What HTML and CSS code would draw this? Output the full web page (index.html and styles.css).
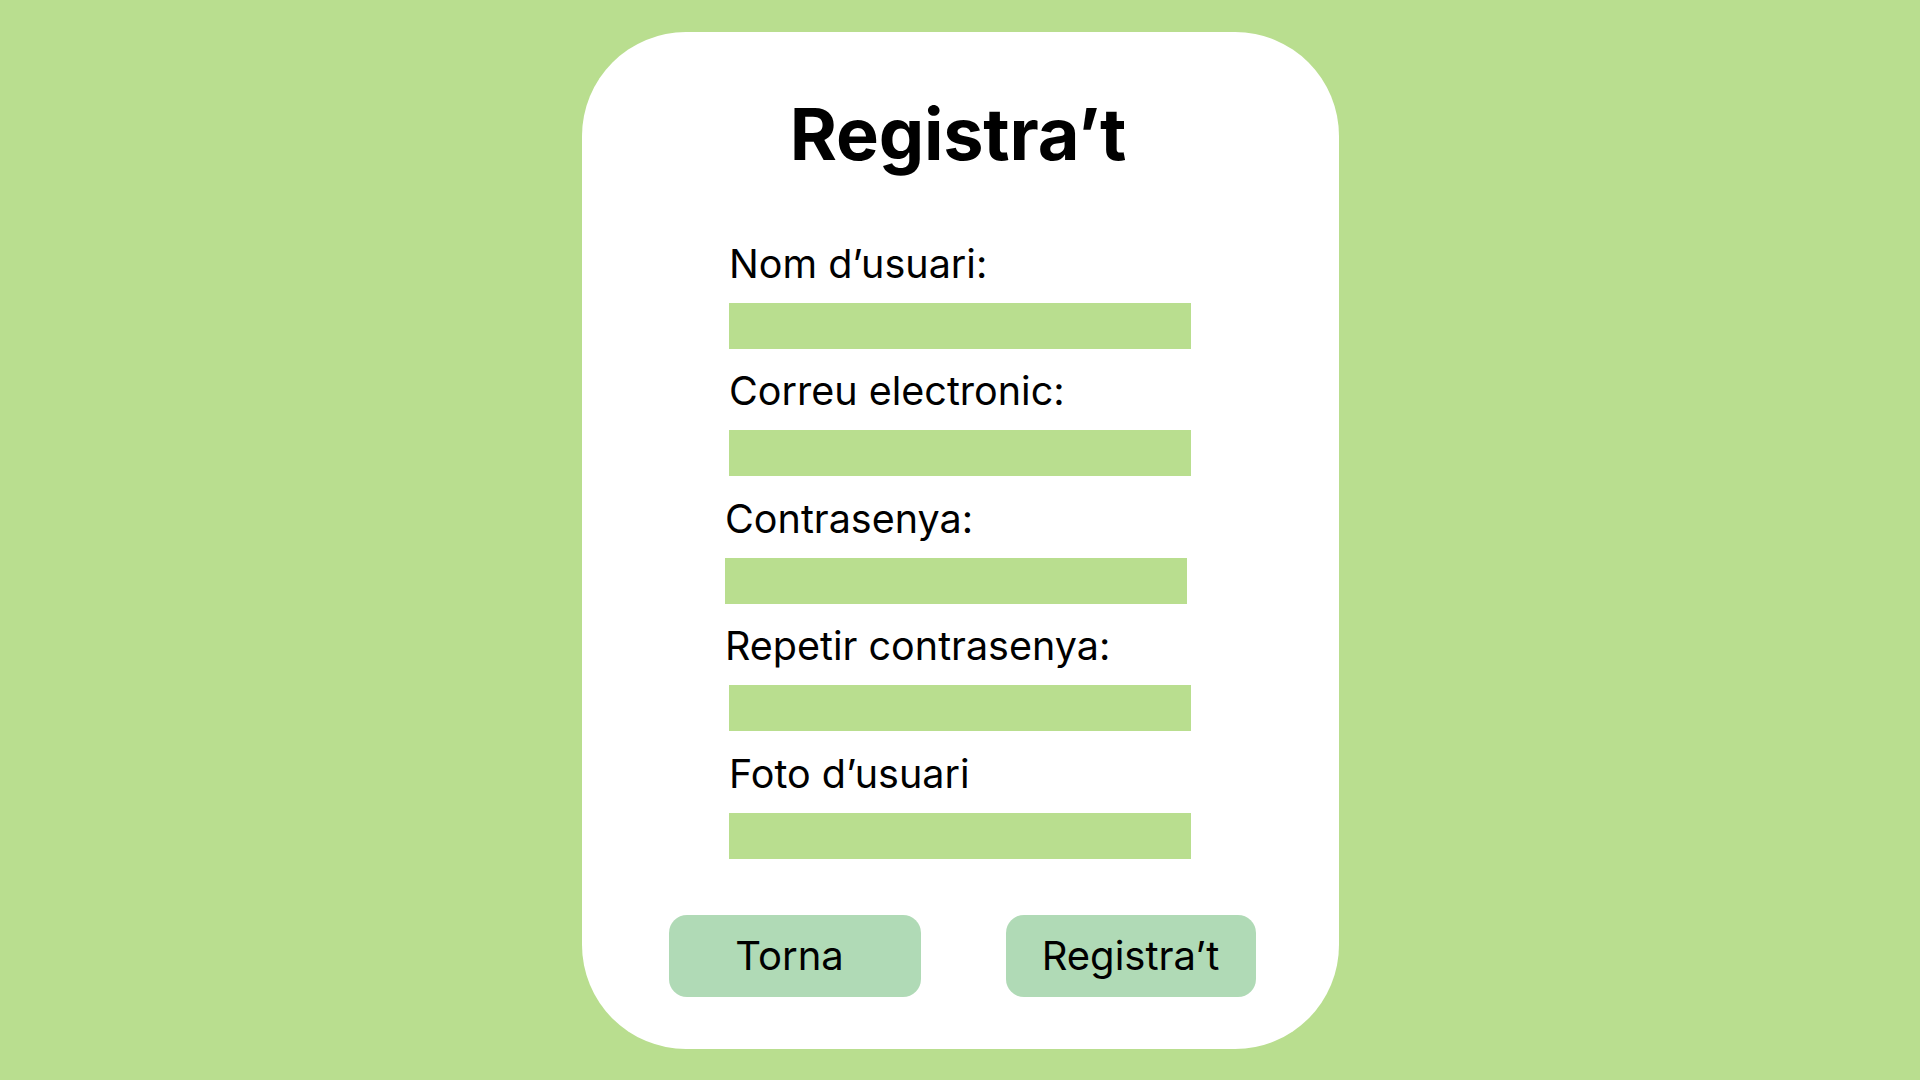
FILE: index.html
```html
<!DOCTYPE html>
<html lang="ca">
<head>
<meta charset="utf-8">
<title>Registra't</title>
<link rel="stylesheet" href="styles.css">
</head>
<body>
<main class="card">
  <h1 class="title">Registra’t</h1>
  <form class="form">
    <div class="field">
      <label class="label">Nom d’usuari:</label>
      <div class="bar"></div>
    </div>
    <div class="field">
      <label class="label">Correu electronic:</label>
      <div class="bar"></div>
    </div>
    <div class="field field-shift">
      <label class="label">Contrasenya:</label>
      <div class="bar"></div>
    </div>
    <div class="field">
      <label class="label label-shift">Repetir contrasenya:</label>
      <div class="bar"></div>
    </div>
    <div class="field">
      <label class="label">Foto d’usuari</label>
      <div class="bar"></div>
    </div>
  </form>
  <div class="actions">
    <button class="btn btn-back" type="button">Torna</button>
    <button class="btn btn-submit" type="button">Registra’t</button>
  </div>
</main>
</body>
</html>
```

FILE: styles.css
```css
* { box-sizing: border-box; }
html, body { margin: 0; padding: 0; }
body {
  width: 1920px;
  height: 1080px;
  background: #b9de8f;
  display: flex;
  align-items: center;
  justify-content: center;
  font-family: Inter, "Noto Sans", sans-serif;
  color: #000;
}
.card {
  width: 757px;
  height: 1017px;
  background: #ffffff;
  border-radius: 104px;
  padding: 59px 0 52px;
  display: flex;
  flex-direction: column;
  align-items: center;
}
.title {
  margin: 0 4px 0 0;
  font-size: 72px;
  line-height: 86px;
  font-weight: 700;
  letter-spacing: -0.2px;
}
.form {
  margin-top: 64px;
  width: 462px;
  display: flex;
  flex-direction: column;
  gap: 19.5px;
}
.field {
  display: flex;
  flex-direction: column;
  gap: 16px;
}
.field-shift { transform: translateX(-4px); }
.label {
  font-size: 39.5px;
  line-height: 46px;
  font-weight: 400;
  padding-left: 0;
}
.label-shift { margin-left: -4px; }
.bar {
  height: 46px;
  background: #b9de8f;
}
.actions {
  margin-top: 56px;
  margin-left: 4px;
  display: flex;
  gap: 85px;
}
.btn {
  height: 82px;
  border: none;
  border-radius: 18px;
  background: #b0dab6;
  font-family: Inter, "Noto Sans", sans-serif;
  font-size: 40px;
  font-weight: 400;
  color: #000;
  padding: 0;
  cursor: pointer;
}
.btn-back { width: 252px; padding-right: 10px; }
.btn-submit { width: 250px; }
```
